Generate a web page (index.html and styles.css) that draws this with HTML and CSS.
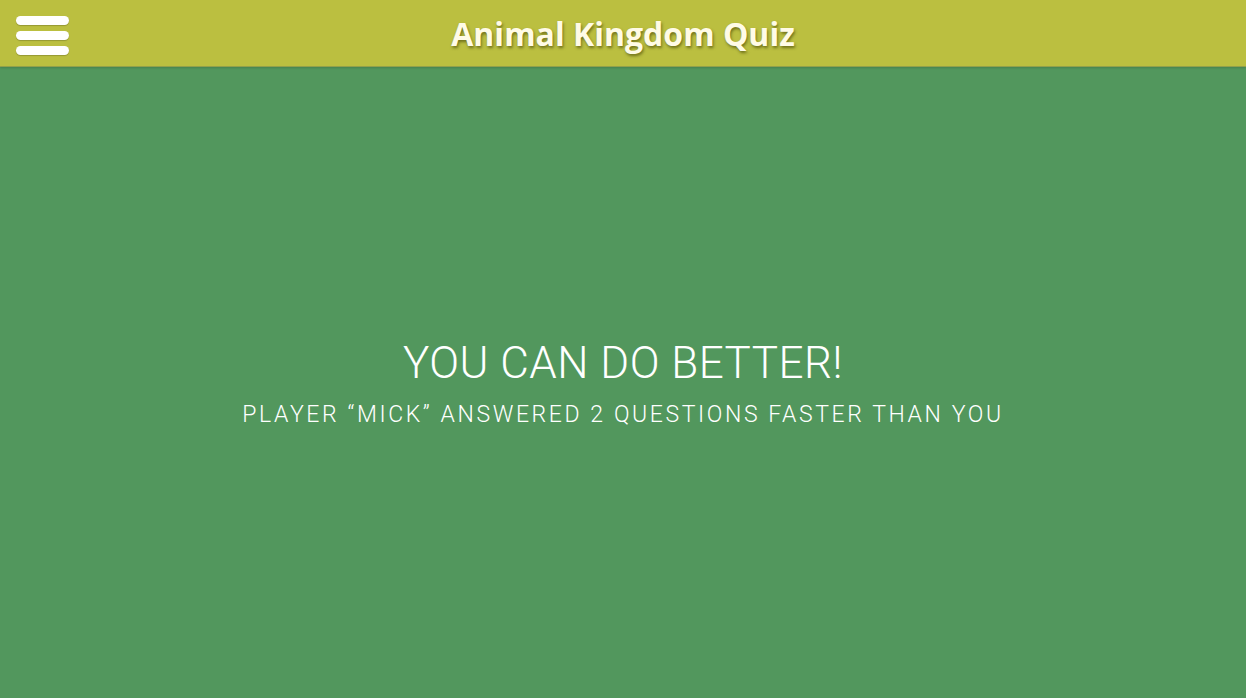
FILE: index.html
```html
<!DOCTYPE html>
<html>
<head>
<meta charset="utf-8">
<link rel="stylesheet" href="styles.css">
</head>
<body>
<header class="topbar">
  <button class="menu-btn" aria-label="Menu">
    <span class="bar"></span>
    <span class="bar"></span>
    <span class="bar"></span>
  </button>
  <h1 class="title">Animal Kingdom Quiz</h1>
</header>
<main class="content">
  <div class="result">
    <h2 class="headline">YOU CAN DO BETTER!</h2>
    <p class="subline">PLAYER “MICK” ANSWERED 2 QUESTIONS FASTER THAN YOU</p>
  </div>
</main>
</body>
</html>
```

FILE: styles.css
```css
html, body {
  margin: 0;
  padding: 0;
  height: 100%;
}
body {
  background: #52975d;
  display: flex;
  flex-direction: column;
  font-family: "Roboto", "Liberation Sans", sans-serif;
}
.topbar {
  position: relative;
  height: 66px;
  background: #bbbf40;
  border-bottom: 1px solid #93a04a;
  box-shadow: 0 1px 2px rgba(0,0,0,0.15);
  display: flex;
  align-items: center;
  justify-content: center;
  flex: none;
}
.menu-btn {
  position: absolute;
  left: 16px;
  top: 16px;
  width: 53px;
  padding: 0;
  border: 0;
  background: none;
  display: flex;
  flex-direction: column;
  gap: 6px;
}
.bar {
  display: block;
  height: 9px;
  border-radius: 5px;
  background: #fff;
  box-shadow: 0 1px 1px rgba(0,0,0,0.2);
}
.title {
  margin: 0;
  color: #fffbe6;
  font-family: "Open Sans", "DejaVu Sans", sans-serif;
  font-weight: 700;
  font-size: 32px;
  letter-spacing: 0;
  text-shadow: 1px 2px 3px rgba(60,60,0,0.6);
}
.content {
  flex: 1;
  display: flex;
  align-items: center;
  justify-content: center;
}
.result {
  text-align: center;
  color: #fff;
}
.headline {
  margin: 0;
  font-weight: 300;
  font-size: 44px;
  letter-spacing: 0.5px;
  line-height: 52px;
}
.subline {
  margin: 12px 0 0;
  font-weight: 300;
  font-size: 23px;
  letter-spacing: 2.6px;
  line-height: 28px;
}
```
